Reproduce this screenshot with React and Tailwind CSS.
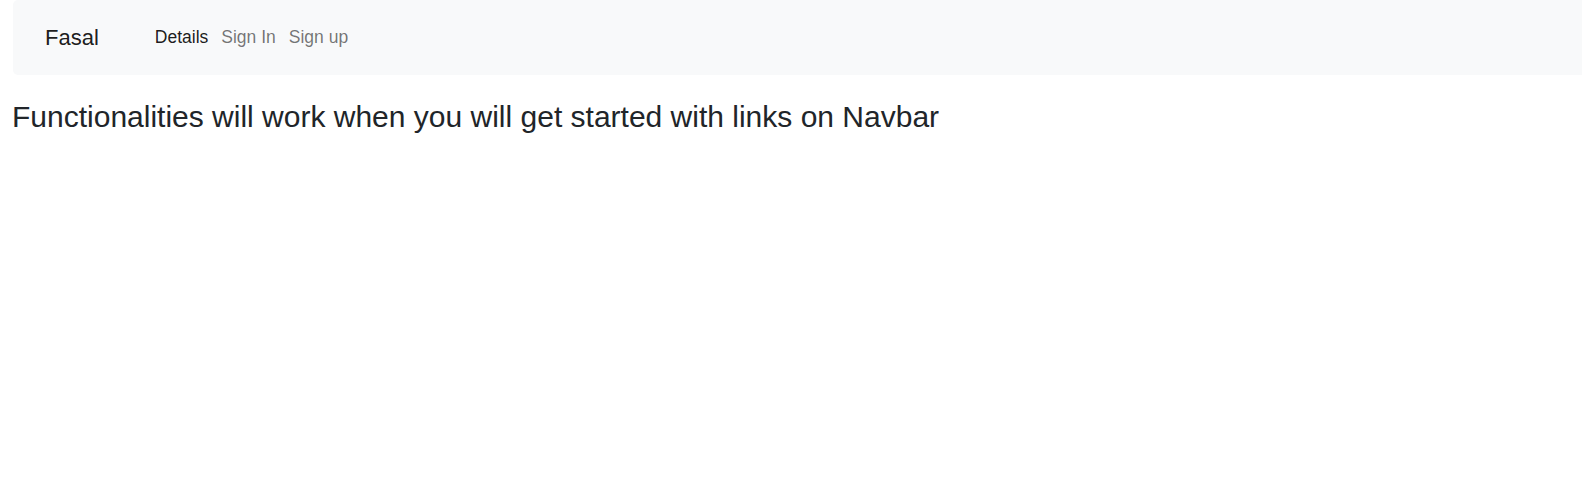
export default function App() {
  return (
    <div className="min-h-screen bg-white font-['Liberation_Sans',Arial,sans-serif]">
      <nav className="ml-[13px] flex h-[75px] items-center rounded-l-[5px] bg-[#f8f9fa] pl-[32px]">
        <a href="#" className="text-[22px] text-black/90">
          Fasal
        </a>
        <div className="ml-[56px] flex gap-[13px] text-[17.5px]">
          <a href="#" className="text-black/90">Details</a>
          <a href="#" className="text-black/55">Sign In</a>
          <a href="#" className="text-black/55">Sign up</a>
        </div>
      </nav>
      <h3 className="mt-[24px] pl-[12px] text-[30px] leading-[1.2] text-[#212529]">
        Functionalities will work when you will get started with links on Navbar
      </h3>
    </div>
  );
}
